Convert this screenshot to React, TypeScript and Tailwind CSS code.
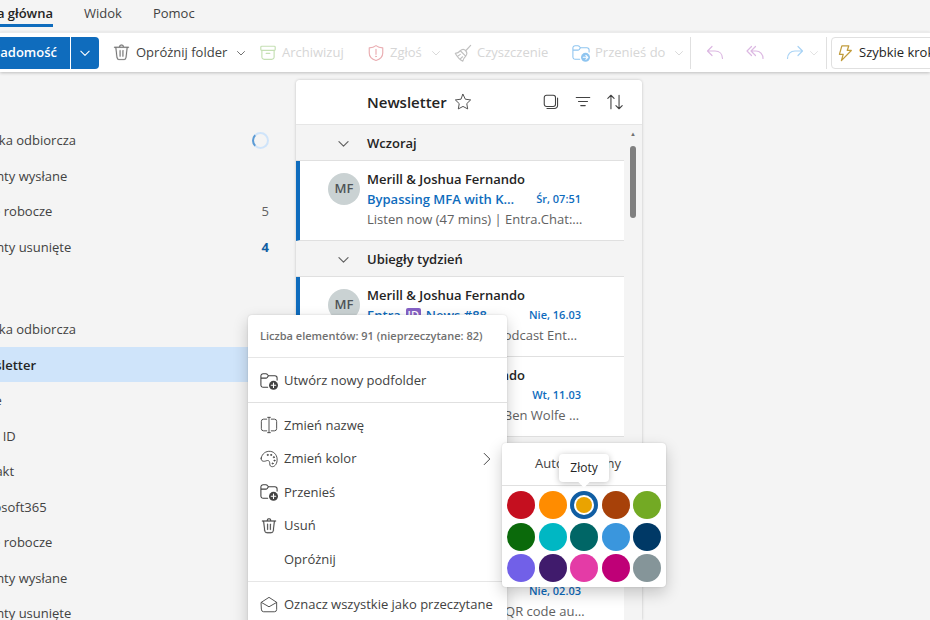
import { type ReactNode } from 'react';
import clsx from 'clsx';

function Icon({ children, className = 'size-5' }: { children: ReactNode; className?: string }) {
  return (
    <svg
      viewBox="0 0 20 20"
      fill="none"
      stroke="currentColor"
      strokeLinecap="round"
      strokeLinejoin="round"
      className={clsx('shrink-0', className)}
      aria-hidden="true"
    >
      {children}
    </svg>
  );
}

function Chevron({ className }: { className?: string }) {
  return <Icon className={className}><path d="M3 7l7 7 7-7" strokeWidth="1.8" /></Icon>;
}

function TrashIcon({ className }: { className?: string }) {
  return (
    <Icon className={className}>
      <path
        stroke="currentColor"
        strokeWidth=".2"
        fill="currentColor"
        d="M8.5 4h3a1.5 1.5 0 0 0-3 0Zm-1 0a2.5 2.5 0 0 1 5 0h5a.5.5 0 0 1 0 1h-1.05l-1.2 10.34A3 3 0 0 1 12.27 18H7.73a3 3 0 0 1-2.98-2.66L3.55 5H2.5a.5.5 0 0 1 0-1h5ZM5.74 15.23A2 2 0 0 0 7.73 17h4.54a2 2 0 0 0 1.99-1.77L15.44 5H4.56l1.18 10.23ZM8.5 7.5c.28 0 .5.22.5.5v6a.5.5 0 0 1-1 0V8c0-.28.22-.5.5-.5ZM12 8a.5.5 0 0 0-1 0v6a.5.5 0 0 0 1 0V8Z"
      />
    </Icon>
  );
}

function ArchiveIcon({ className }: { className?: string }) {
  return (
    <Icon className={className}>
      <rect x="2" y="2.5" width="16" height="4.5" rx="1" strokeWidth="1.3" />
      <path d="M3.2 7v7.5A2.5 2.5 0 0 0 5.7 17h8.6a2.5 2.5 0 0 0 2.5-2.5V7M8 10.5h4" strokeWidth="1.3" />
    </Icon>
  );
}

function ShieldIcon({ className }: { className?: string }) {
  return (
    <Icon className={className}>
      <path d="M10 1.8c2 1.5 4.5 2.3 7.5 2.5V10c0 4.4-3 6.9-7.5 8.3C5.5 16.9 2.5 14.4 2.5 10V4.3C5.5 4.1 8 3.3 10 1.8ZM10 6v5.5" strokeWidth="1.3" />
      <circle cx="10" cy="13.8" r=".5" fill="currentColor" />
    </Icon>
  );
}

function BroomIcon({ className }: { className?: string }) {
  return (
    <Icon className={className}>
      <path
        d="M18.500 1.500l-5.500 6M7 7.500c2-2 4.300-2 6 0s1.800 3.900 0 6M7 7.500l6 6M7 7.500C5.500 9.200 3.500 10.200 1.500 10.500 3.500 14 6.500 17.500 9.800 19c.4-1.900 1.400-3.700 3.200-5.500M4.300 13.500L7 11.500M7 16.500l2.500-2.300"
        strokeWidth="1.3"
      />
    </Icon>
  );
}

// Folder with a round badge in the lower right corner
function FolderBadgeIcon({ className, badge }: { className?: string; badge: 'plus' | 'arrow' }) {
  return (
    <Icon className={className}>
      <path
        d="M8.5 17H3.5A2.5 2.5 0 0 1 1 14.5V4.5A2.5 2.5 0 0 1 3.5 2h3.2c.5 0 .9.2 1.2.5L9.5 4.2h7A2.5 2.5 0 0 1 19 6.7V9M1 6.8h5.7c.5 0 .9-.2 1.2-.5l1.6-2.1"
        strokeWidth="1.2"
      />
      <circle cx="15" cy="14.8" r="5" fill="currentColor" stroke="none" />
      <path
        stroke="white"
        strokeWidth="1.2"
        d={badge === 'plus' ? 'M15 12.300v5M12.500 14.800h5' : 'M12.500 14.800h5M15.400 12.600l2.200 2.200-2.200 2.200'}
      />
    </Icon>
  );
}

function ReplyIcon({ className }: { className?: string }) {
  return <Icon className={className}><path d="M7 3.5L2.5 8 7 12.5M2.5 8H10c4.5 0 7.5 3 7.5 7.5" strokeWidth="1.2" /></Icon>;
}

function ReplyAllIcon({ className }: { className?: string }) {
  return (
    <Icon className={className}>
      <path d="M6.5 3.5L2 8l4.5 4.5M10.5 3.5L6 8l4.5 4.5M6 8h5c4 0 7 3 7 7.5" strokeWidth="1.2" />
    </Icon>
  );
}

function ForwardIcon({ className }: { className?: string }) {
  return <Icon className={className}><path d="M13 3.5L17.5 8 13 12.5M17.5 8H10c-4.5 0-7.5 3-7.5 7.5" strokeWidth="1.2" /></Icon>;
}

function BoltIcon({ className }: { className?: string }) {
  return (
    <Icon className={className}>
      <path d="M6.5 2h7.7l-1.7 5.2h4.5L6 18.5l2-7H3.8Z" strokeWidth="1.4" />
    </Icon>
  );
}

function RenameIcon() {
  return (
    <Icon className="size-[18px]">
      <path d="M7.5 3.5H4A2.5 2.5 0 0 0 1.5 6v8A2.5 2.5 0 0 0 4 16.5h3.5M12.5 3.5H16A2.5 2.5 0 0 1 18.5 6v8a2.5 2.5 0 0 1-2.5 2.5h-3.5M10 1.5v17M8.5 1.5h3M8.5 18.5h3" />
    </Icon>
  );
}

function PaletteIcon() {
  return (
    <Icon className="size-[18px]">
      <path d="M1.3 9C2.3 4 6.5 1 11.5 1.5c4.9.5 8 5.2 7.5 10.2-.4 4.5-3.2 7.3-6 6.8-2.4-.4-2.1-2.8-2.2-4.3-.2-2.4-2-3-3.9-2.2C4.7 13 .6 13 1.3 9Z" />
      <circle cx="8.5" cy="5.5" r=".6" /><circle cx="12.3" cy="5.5" r=".6" /><circle cx="15.3" cy="8" r=".6" />
      <circle cx="16" cy="11.8" r=".6" /><circle cx="14" cy="15" r=".6" />
    </Icon>
  );
}

function MailReadIcon() {
  return (
    <Icon className="size-[18px]">
      <path d="M1.5 7L10 1.5 18.5 7v8a2.5 2.5 0 0 1-2.5 2.5H4A2.5 2.5 0 0 1 1.5 15ZM1.8 7.3L10 12l8.2-4.7" />
    </Icon>
  );
}

const accounts = [
  { name: 'Skrzynka odbiorcza', loading: true },
  { name: 'Elementy wysłane' },
  { name: 'Wersje robocze', count: 5 },
  { name: 'Elementy usunięte', count: 4, unread: true },
];

const folders = [
  { name: 'Skrzynka odbiorcza' },
  { name: 'Newsletter', nested: true, selected: true },
  { name: 'Azure', nested: true },
  { name: 'Entra ID', nested: true },
  { name: 'Kontakt', nested: true },
  { name: 'Microsoft365', nested: true },
  { name: 'Wersje robocze' },
  { name: 'Elementy wysłane' },
  { name: 'Elementy usunięte' },
];

const colors = [
  ['Ciemnoczerwony', 'bg-[#c50f1f]'],
  ['Pomarańczowy', 'bg-[#ff8c00]'],
  ['Złoty', 'bg-[#eaa300]'],
  ['Brązowy', 'bg-[#a74109]'],
  ['Jasnozielony', 'bg-[#73aa24]'],
  ['Zielony', 'bg-[#0b6a0b]'],
  ['Jasnoturkusowy', 'bg-[#00b7c3]'],
  ['Turkusowy', 'bg-[#006666]'],
  ['Niebieski', 'bg-[#3a96dd]'],
  ['Granatowy', 'bg-[#003966]'],
  ['Lawendowy', 'bg-[#7160e8]'],
  ['Fioletowy', 'bg-[#401b6c]'],
  ['Różowy', 'bg-[#e43ba6]'],
  ['Magenta', 'bg-[#bf0077]'],
  ['Szary', 'bg-[#859599]'],
];

function Tabs() {
  return (
    <nav className="-ml-10 flex h-8 shrink-0 items-start text-[13px]">
      <button className="h-[27px] w-[93px] border-b-[3px] border-[#0f6cbd] pt-[3px] text-right font-semibold whitespace-nowrap text-[#242424]">
        Strona główna
      </button>
      <button className="ml-[31px] h-[27px] border-b-[3px] border-transparent pt-[3px]">Widok</button>
      <button className="ml-[31px] h-[27px] border-b-[3px] border-transparent pt-[3px]">Pomoc</button>
    </nav>
  );
}

function RibbonButton({ icon, label, width, menu, disabled }: {
  icon: ReactNode;
  label: string;
  width: string;
  menu?: boolean;
  disabled?: boolean;
}) {
  return (
    <button
      disabled={disabled}
      className={clsx('flex h-8 shrink-0 items-center gap-[5px] whitespace-nowrap', width, disabled && 'text-[#d6d6d6]')}
    >
      {icon}
      <span>{label}</span>
      {menu && <Chevron className={clsx('ml-1 size-[10px]', !disabled && 'text-[#616161]')} />}
    </button>
  );
}

function Ribbon() {
  return (
    <div className="z-10 flex h-10 shrink-0 items-center overflow-hidden border-t border-[#ebebeb] bg-white text-[13px] shadow-[0_1px_3px_rgba(0,0,0,0.22)]">
      <button className="-ml-16 h-8 w-[134px] shrink-0 bg-[#0f6cbd] pr-[13px] text-right font-semibold whitespace-nowrap text-white">
        Nowa wiadomość
      </button>
      <button aria-label="Więcej opcji" className="mr-[13px] ml-px flex h-8 w-[28px] shrink-0 items-center justify-center rounded-r bg-[#0f6cbd] text-white">
        <Chevron className="size-3" />
      </button>
      <RibbonButton icon={<TrashIcon className="size-[19px] text-[#707070]" />} label="Opróżnij folder" width="w-[147px]" menu />
      <RibbonButton icon={<ArchiveIcon className="size-[18px] text-[#c5e0b4]" />} label="Archiwizuj" width="w-[108px]" disabled />
      <RibbonButton icon={<ShieldIcon className="size-[18px] text-[#eaaeb2]" />} label="Zgłoś" width="w-[87px]" menu disabled />
      <RibbonButton icon={<BroomIcon className="size-[18px] text-[#c0c0c0]" />} label="Czyszczenie" width="w-[118px]" disabled />
      <RibbonButton icon={<FolderBadgeIcon badge="arrow" className="size-[18px] text-[#8fc5f0]" />} label="Przenieś do" width="w-[118px]" menu disabled />
      <div className="h-8 w-px shrink-0 bg-[#e0e0e0]" />
      <div className="flex shrink-0 items-center pl-[14px]">
        <button aria-label="Odpowiedz" disabled className="w-10 text-[#dcb8e2]"><ReplyIcon className="size-5" /></button>
        <button aria-label="Odpowiedz wszystkim" disabled className="w-10 text-[#dcb8e2]"><ReplyAllIcon className="size-5" /></button>
        <button aria-label="Prześlij dalej" disabled className="flex w-[41px] items-center gap-1 text-[#a9d3f5]">
          <ForwardIcon className="size-5" />
          <Chevron className="size-[10px] text-[#e0e0e0]" />
        </button>
      </div>
      <div className="h-8 w-px shrink-0 bg-[#e0e0e0]" />
      <button className="ml-1 flex h-8 shrink-0 items-center gap-[5px] rounded border border-[#e0e0e0] px-1 pt-px whitespace-nowrap text-[#242424]">
        <BoltIcon className="size-[18px] text-[#c19c3c]" />
        Szybkie kroki
        <Chevron className="size-[10px]" />
      </button>
    </div>
  );
}

function Sidebar() {
  return (
    <aside className="w-[296px] shrink-0 overflow-hidden pt-[50px] text-[13px]">
      <ul className="-ml-[41px] grid h-[142px] auto-rows-fr pr-[27px]">
        {accounts.map(f => (
          <li key={f.name} className="flex items-center justify-between pt-[2px]">
            <a href="#">{f.name}</a>
            {f.loading && <span className="size-[17px] rounded-full border-2 border-[#cfe4fa] border-l-[#5c9bd5]" />}
            {f.count && (
              <span className={f.unread ? 'font-bold text-[#115ea3]' : 'text-[#616161]'}>{f.count}</span>
            )}
          </li>
        ))}
      </ul>
      <ul className="-ml-[41px] mt-[47px] grid h-[320px] auto-rows-fr">
        {folders.map(f => (
          <li
            key={f.name}
            className={clsx(
              'flex items-center pt-[2px]',
              f.nested && 'pl-2',
              f.selected && 'bg-[#cfe4fa] font-semibold text-[#242424]',
            )}
          >
            <a href="#">{f.name}</a>
          </li>
        ))}
      </ul>
    </aside>
  );
}

function GroupHeader({ label }: { label: string }) {
  return (
    <button className="flex h-9 w-full items-center border-b border-[#e0e0e0] pt-[2px] text-left text-[13px] font-semibold text-[#242424]">
      <Chevron className="mr-[17px] ml-[41px] size-[13px] text-[#616161]" />
      {label}
    </button>
  );
}

function Message({ subject, date, preview }: { subject: ReactNode; date: string; preview: string }) {
  return (
    <article className="flex h-20 border-b border-l-4 border-b-[#e0e0e0] border-l-[#0f6cbd] bg-white pt-2 pl-7 text-[13px]">
      <div className="mt-1 mr-[7px] flex size-8 shrink-0 items-center justify-center rounded-full bg-[#cad2d3] font-semibold text-[#4f5457]">
        MF
      </div>
      <div className="w-[214px] leading-5">
        <div className="font-semibold whitespace-nowrap text-[#242424]">Merill &amp; Joshua Fernando</div>
        <div className="flex justify-between whitespace-nowrap text-[#0f6cbd]">
          <span className="font-semibold">{subject}</span>
          <span className="text-[11px] font-semibold">{date}</span>
        </div>
        <div className="whitespace-nowrap text-[#616161]">{preview}</div>
      </div>
    </article>
  );
}

function MessageList() {
  return (
    <section className="flex w-[346px] shrink-0 flex-col rounded-t bg-[#f4f4f4] shadow-[0_0_3px_rgba(0,0,0,0.22)]">
      <header className="flex h-[45px] shrink-0 items-center rounded-t border-b border-[#e6e6e6] bg-white pr-[18px] pl-[71px] text-[#424242]">
        <h1 className="mr-[7px] text-[15px] font-semibold text-[#242424]">Newsletter</h1>
        <button aria-label="Dodaj do ulubionych">
          <Icon className="size-[18px]">
            <path d="M10 1.5l2.6 5.4 5.9.8-4.3 4.1 1 5.9-5.2-2.8-5.2 2.8 1-5.9-4.3-4.1 5.9-.8Z" />
          </Icon>
        </button>
        <div className="ml-auto flex gap-[14px]">
          <button aria-label="Zaznacz">
            <Icon className="size-[18px]">
              <rect x="2.5" y="2.5" width="12.5" height="12.5" rx="2.5" strokeWidth="1.2" />
              <path d="M17.3 5.5v8.3a3.5 3.5 0 0 1-3.5 3.5H5.5" strokeWidth="1.2" />
            </Icon>
          </button>
          <button aria-label="Filtruj">
            <Icon className="size-[18px]"><path d="M2.5 5h15M5 9.5h10M7.5 14h5" strokeWidth="1.2" /></Icon>
          </button>
          <button aria-label="Sortuj">
            <Icon className="size-[18px]">
              <path d="M5.5 17.5v-15M2 6l3.5-3.5L9 6M14.5 2.5v15M11 14l3.5 3.5L18 14" strokeWidth="1.2" />
            </Icon>
          </button>
        </div>
      </header>
      <div className="flex min-h-0 flex-1 overflow-hidden">
        <div className="min-w-0 flex-1">
          <GroupHeader label="Wczoraj" />
          <Message subject="Bypassing MFA with K…" date="Śr, 07:51" preview="Listen now (47 mins) | Entra.Chat:…" />
          <GroupHeader label="Ubiegły tydzień" />
          <Message
            subject={
              <span className="flex items-center gap-[5px]">
                Entra
                <span className="flex size-[15px] items-center justify-center rounded-xs bg-[#8661c5] text-[11px] text-white">ID</span>
                News #88
              </span>
            }
            date="Nie, 16.03"
            preview="Hear new Entra.Chat podcast Ent…"
          />
          <Message subject="Entra.Chat" date="Wt, 11.03" preview="The conversation with Ben Wolfe …" />
          <GroupHeader label="Ubiegły miesiąc" />
          <Message subject="Entra News #87" date="Nie, 09.03" preview="New features in Entra" />
          <Message subject="Entra News #86" date="Nie, 02.03" preview="New Entra passkeys, a QR code au…" />
        </div>
        <div className="flex w-[18px] flex-col items-center pt-[6px]">
          <span className="text-[6px] leading-[7px] text-[#707070]">▲</span>
          <div className="mt-2 h-[72px] w-[6px] rounded-full bg-[#808080]" />
        </div>
      </div>
    </section>
  );
}

function MenuItem({ icon, label, arrow }: { icon?: ReactNode; label: string; arrow?: boolean }) {
  return (
    <button role="menuitem" className="flex w-full items-center gap-[6px] pt-px pr-[13px] pl-3 text-left text-[13px] whitespace-nowrap text-[#424242]">
      <span className="w-[18px] shrink-0">{icon}</span>
      <span className="flex-1">{label}</span>
      {arrow && <Icon className="size-[14px]"><path d="M6 2l8 8-8 8" strokeWidth="1.4" /></Icon>}
    </button>
  );
}

function FolderMenu() {
  return (
    <div role="menu" className="absolute top-[315px] left-[248px] z-20 w-[259px] rounded bg-white pb-10 shadow-[0_6px_16px_rgba(0,0,0,0.2),0_0_2px_rgba(0,0,0,0.15)]">
      <div className="flex h-[43px] items-center border-b border-[#e6e6e6] px-3 text-[11px] font-semibold whitespace-nowrap text-[#707070]">
        Liczba elementów: 91 (nieprzeczytane: 82)
      </div>
      <div className="grid h-[45px] border-b border-[#e0e0e0]">
        <MenuItem icon={<FolderBadgeIcon badge="plus" className="size-[18px]" />} label="Utwórz nowy podfolder" />
      </div>
      <div className="grid h-[179px] auto-rows-fr border-b border-[#e6e6e6] py-[5px]">
        <MenuItem icon={<RenameIcon />} label="Zmień nazwę" />
        <MenuItem icon={<PaletteIcon />} label="Zmień kolor" arrow />
        <MenuItem icon={<FolderBadgeIcon badge="plus" className="size-[18px]" />} label="Przenieś" />
        <MenuItem icon={<TrashIcon className="size-[18px]" />} label="Usuń" />
        <MenuItem label="Opróżnij" />
      </div>
      <div className="grid h-[44px]">
        <MenuItem icon={<MailReadIcon />} label="Oznacz wszystkie jako przeczytane" />
      </div>
    </div>
  );
}

function ColorMenu() {
  return (
    <div role="menu" className="absolute top-[443px] left-[502px] z-30 w-[164px] rounded bg-white shadow-[0_6px_16px_rgba(0,0,0,0.2),0_0_2px_rgba(0,0,0,0.15)]">
      <button className="h-[43px] w-full border-b border-[#e0e0e0] pr-3 text-center text-[13px] text-[#424242]">Automatyczny</button>
      <div className="grid h-[101px] grid-cols-[repeat(5,28px)] content-between justify-between px-[5px] py-[5px]">
        {colors.map(([name, bg]) =>
          name === 'Złoty' ? (
            <div key={name} className="relative size-7">
              <button aria-label={name} className="flex size-7 items-center justify-center rounded-full border-4 border-[#115ea3] bg-white">
                <span className={clsx('size-4 shrink-0 rounded-full', bg)} />
              </button>
              <div role="tooltip" className="absolute bottom-[37px] left-1/2 flex h-7 w-[50px] -translate-x-1/2 items-center justify-center rounded bg-white text-[12px] text-[#242424] shadow-[0_1px_6px_rgba(0,0,0,0.25)]">
                Złoty
                <span className="absolute -bottom-1 size-2 rotate-45 bg-white" />
              </div>
            </div>
          ) : (
            <button key={name} aria-label={name} className={clsx('size-7 rounded-full', bg)} />
          ),
        )}
      </div>
    </div>
  );
}

export default function App() {
  return (
    <div className="relative flex h-screen flex-col overflow-hidden bg-[#f4f4f4] font-['Open_Sans','Noto_Sans',sans-serif] text-[#424242]">
      <Tabs />
      <Ribbon />
      <main className="flex min-h-0 flex-1">
        <Sidebar />
        <div className="flex pt-2">
          <MessageList />
        </div>
      </main>
      <FolderMenu />
      <ColorMenu />
    </div>
  );
}
